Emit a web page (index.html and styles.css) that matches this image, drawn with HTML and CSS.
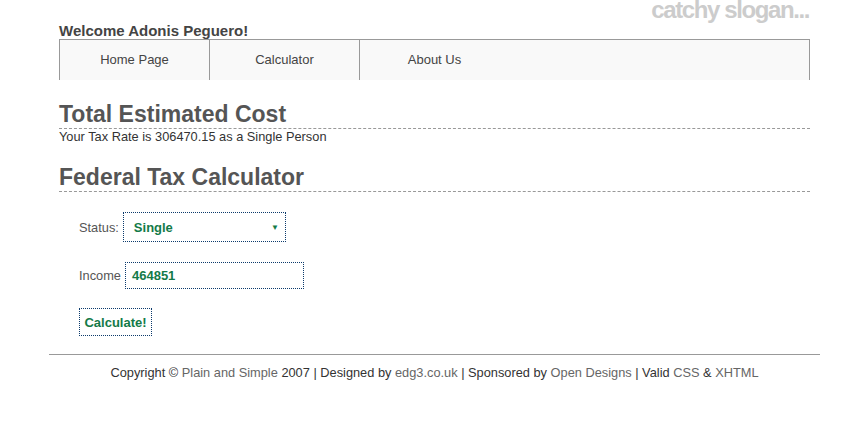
FILE: index.html
```html
<!DOCTYPE html>
<html>
<head>
<meta charset="utf-8">
<title>Federal Tax Calculator</title>
<link rel="stylesheet" href="styles.css">
</head>
<body>
<div class="wrap">
  <div class="inner">
    <div class="slogan">catchy slogan...</div>
    <div class="welcome">Welcome Adonis Peguero!</div>
    <nav class="nav">
      <a class="nav-item bordered">Home Page</a>
      <a class="nav-item bordered">Calculator</a>
      <a class="nav-item">About Us</a>
    </nav>
    <h2 class="heading first">Total Estimated Cost</h2>
    <p class="rate">Your Tax Rate is 306470.15 as a Single Person</p>
    <h2 class="heading second">Federal Tax Calculator</h2>
    <form class="form">
      <div class="row status-row">
        <span class="label">Status:</span>
        <div class="select"><span>Single</span><span class="arrow">▼</span></div>
      </div>
      <div class="row">
        <span class="label">Income</span>
        <div class="input">464851</div>
      </div>
      <div class="row last-row">
        <div class="button">Calculate!</div>
      </div>
    </form>
  </div>
  <footer class="footer">
    Copyright © <a>Plain and Simple</a> 2007 | Designed by <a>edg3.co.uk</a> | Sponsored by <a>Open Designs</a> | Valid <a>CSS</a> &amp; <a>XHTML</a>
  </footer>
</div>
</body>
</html>
```
FILE: styles.css
```css
html, body {
  margin: 0;
  padding: 0;
  background: #fff;
}
body {
  font-family: "Liberation Sans", Arial, sans-serif;
  color: #444;
}
.wrap {
  margin-left: 49px;
  width: 771px;
}
.inner {
  padding: 0 10px;
}
.slogan {
  text-align: right;
  font-size: 24px;
  font-weight: bold;
  letter-spacing: -1.4px;
  color: #ccc;
  line-height: 20px;
  height: 20px;
  margin-top: -2px;
  padding-top: 2px;
  box-sizing: border-box;
  padding-right: 1px;
}
.welcome {
  font-size: 15px;
  font-weight: bold;
  color: #444;
  line-height: 17px;
  padding-top: 4px;
  height: 17px;
}
.nav {
  display: flex;
  height: 40px;
  border: 1px solid #999;
  border-bottom: none;
  background: #f9f9f9;
}
.nav-item {
  width: 149px;
  text-align: center;
  font-size: 13px;
  line-height: 40px;
  color: #444;
}
.nav-item.bordered {
  border-right: 1px solid #999;
}
.heading {
  margin: 0;
  font-size: 23px;
  font-weight: bold;
  color: #555;
  line-height: 26px;
  border-bottom: 1px dashed #999;
  padding-bottom: 1px;
}
.heading.first {
  margin-top: 21px;
}
.heading.second {
  margin-top: 20px;
}
.rate {
  margin: 0;
  font-size: 12.8px;
  line-height: 15px;
  color: #333;
}
.form {
  padding: 20px 0 0 20px;
}
.row {
  display: flex;
  align-items: center;
  margin-bottom: 19px;
}
.status-row {
  margin-bottom: 20px;
}
.last-row {
  margin-bottom: 18px;
}
.label {
  font-size: 12.8px;
  color: #555;
  margin-right: 4px;
}
.select, .input, .button {
  border: 1px dotted #0b3a6c;
  box-sizing: border-box;
  font-size: 13px;
  font-weight: bold;
  color: #137a48;
  display: flex;
  align-items: center;
}
.select {
  width: 163px;
  height: 30px;
  padding: 0 6px 0 10px;
  justify-content: space-between;
}
.arrow {
  font-size: 8px;
}
.input {
  width: 179px;
  height: 27px;
  padding-left: 6px;
}
.button {
  width: 73px;
  height: 28px;
  justify-content: center;
}
.footer {
  border-top: 1px solid #999;
  padding-top: 10px;
  text-align: center;
  font-size: 12.8px;
  color: #333;
  line-height: 15px;
}
.footer a {
  color: #666;
}
```
